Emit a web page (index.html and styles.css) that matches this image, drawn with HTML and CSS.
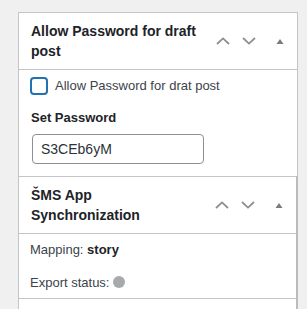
FILE: index.html
```html
<!DOCTYPE html>
<html lang="en">
<head>
<meta charset="utf-8">
<title>Metaboxes</title>
<link rel="stylesheet" href="styles.css">
</head>
<body>
<div class="stack">
  <section class="postbox">
    <div class="postbox-header">
      <h2 class="hndle">Allow Password for draft post</h2>
      <div class="handle-actions">
        <button class="order-btn" type="button" aria-label="Move up">
          <svg width="14" height="8" viewBox="0 0 14 8"><path d="M1 7 L7 1.4 L13 7" fill="none" stroke="#8c8f94" stroke-width="1.8"/></svg>
        </button>
        <button class="order-btn" type="button" aria-label="Move down">
          <svg width="14" height="8" viewBox="0 0 14 8"><path d="M1 1 L7 6.6 L13 1" fill="none" stroke="#8c8f94" stroke-width="1.8"/></svg>
        </button>
        <button class="toggle-btn" type="button" aria-label="Toggle panel">
          <svg width="8" height="6" viewBox="0 0 8 6"><polygon points="0.5,6 4,1 7.5,6" fill="#787c82"/></svg>
        </button>
      </div>
    </div>
    <div class="inside inside-password">
      <label class="check-row">
        <span class="checkbox"></span>
        <span>Allow Password for drat post</span>
      </label>
      <p class="field-label">Set Password</p>
      <div class="text-input">S3CEb6yM</div>
    </div>
  </section>

  <section class="postbox postbox-sync">
    <div class="postbox-header">
      <h2 class="hndle">ŠMS App Synchronization</h2>
      <div class="handle-actions">
        <button class="order-btn" type="button" aria-label="Move up">
          <svg width="14" height="8" viewBox="0 0 14 8"><path d="M1 7 L7 1.4 L13 7" fill="none" stroke="#8c8f94" stroke-width="1.8"/></svg>
        </button>
        <button class="order-btn" type="button" aria-label="Move down">
          <svg width="14" height="8" viewBox="0 0 14 8"><path d="M1 1 L7 6.6 L13 1" fill="none" stroke="#8c8f94" stroke-width="1.8"/></svg>
        </button>
        <button class="toggle-btn" type="button" aria-label="Toggle panel">
          <svg width="8" height="6" viewBox="0 0 8 6"><polygon points="0.5,6 4,1 7.5,6" fill="#787c82"/></svg>
        </button>
      </div>
    </div>
    <div class="inside inside-sync">
      <p>Mapping: <strong>story</strong></p>
      <p>Export status: <span class="status-dot"></span></p>
    </div>
  </section>

  <section class="postbox postbox-next"></section>
</div>
</body>
</html>
```

FILE: styles.css
```css
html, body {
  margin: 0;
  padding: 0;
  background: #f0f0f1;
  height: 100%;
  overflow: hidden;
}

body {
  font-family: "Liberation Sans", Arial, sans-serif;
  font-size: 13px;
  color: #3c434a;
}

.stack {
  padding: 12px 0 0 18px;
  width: 280px;
  height: 100%;
  box-sizing: content-box;
  display: flex;
  flex-direction: column;
}

.postbox {
  background: #fff;
  border: 1px solid #c3c4c7;
  box-sizing: border-box;
}

.postbox:first-child {
  border-bottom: none;
}

.postbox-sync {
  border-bottom: none;
  border-right: 2px solid #b9bbbe;
}

.postbox-next {
  border-right: 2px solid #b9bbbe;
  flex: 1;
}

.postbox-header {
  display: flex;
  align-items: center;
  justify-content: space-between;
  border-bottom: 1px solid #c3c4c7;
}

.hndle {
  margin: 0;
  padding: 8px 9px 8px 12px;
  font-size: 14px;
  font-weight: 700;
  line-height: 20px;
  color: #1d2327;
  flex: 1;
}

.handle-actions {
  display: flex;
  align-items: center;
  flex-shrink: 0;
}

.order-btn,
.toggle-btn {
  border: 0;
  background: none;
  padding: 0;
  margin: 0;
  display: flex;
  align-items: center;
  justify-content: center;
  cursor: pointer;
}

.order-btn {
  width: 26px;
  height: 26px;
}

.order-btn svg {
  margin-left: 2px;
}

.toggle-btn {
  width: 36px;
  height: 36px;
}

.toggle-btn svg {
  margin-left: 2px;
}

.inside-password {
  padding: 7px 12px 12px 12px;
}

.check-row {
  display: flex;
  align-items: center;
  gap: 7px;
  height: 18px;
  margin-left: -1px;
  line-height: 18px;
}

.checkbox {
  width: 14px;
  height: 14px;
  border: 2px solid #2271b1;
  border-radius: 4px;
  background: #fff;
  flex-shrink: 0;
}

.field-label {
  margin: 14px 0 7px 0;
  line-height: 18px;
  font-weight: 700;
  color: #1d2327;
}

.text-input {
  width: 172px;
  height: 30px;
  box-sizing: border-box;
  border: 1px solid #8c8f94;
  border-radius: 4px;
  padding: 0 8px;
  margin-left: 1px;
  font-size: 14px;
  line-height: 28px;
  color: #2c3338;
}

.inside-sync {
  padding: 6px 11px 6px 11px;
  display: flex;
  flex-direction: column;
  gap: 13px;
}

.inside-sync p {
  margin: 0;
  line-height: 19.5px;
}

.inside-sync strong {
  font-weight: 700;
  color: #1d2327;
}

.status-dot {
  display: inline-block;
  width: 12px;
  height: 12px;
  border-radius: 50%;
  background: #a7aaad;
  vertical-align: -1px;
}
```
